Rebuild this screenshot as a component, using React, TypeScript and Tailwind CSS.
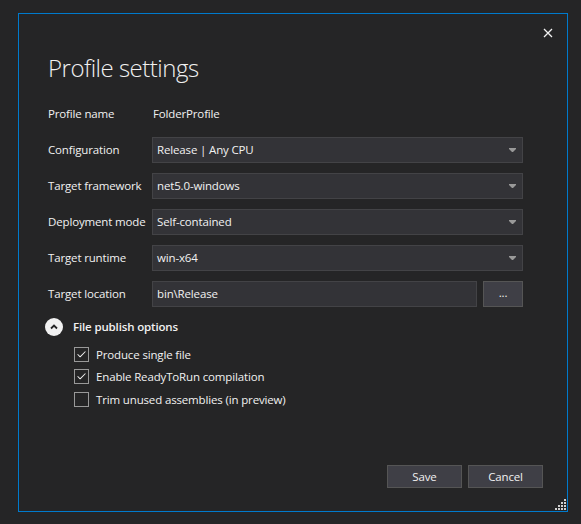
import { Check } from "lucide-react";

const fields = [
  { label: "Configuration", value: "Release | Any CPU" },
  { label: "Target framework", value: "net5.0-windows" },
  { label: "Deployment mode", value: "Self-contained" },
  { label: "Target runtime", value: "win-x64" },
];

const options = [
  { label: "Produce single file", checked: true },
  { label: "Enable ReadyToRun compilation", checked: true },
  { label: "Trim unused assemblies (in preview)", checked: false },
];

function DropArrow() {
  return (
    <svg width="7" height="4" viewBox="0 0 7 4" className="shrink-0">
      <path d="M0 0h7v1L4 4H3L0 1z" fill="#999999" />
    </svg>
  );
}

function ComboBox({ value }: { value: string }) {
  return (
    <div className="flex h-[26px] w-[371px] items-center justify-between border border-[#434346] bg-[#333337] pl-[4px] pr-[6px]">
      <span>{value}</span>
      <DropArrow />
    </div>
  );
}

function Row({ label, children }: { label: string; children: React.ReactNode }) {
  return (
    <div className="flex h-[26px] items-center">
      <div className="w-[104px] shrink-0 whitespace-nowrap">{label}</div>
      {children}
    </div>
  );
}

function CheckOption({ label, checked }: { label: string; checked: boolean }) {
  return (
    <div className="flex h-[22.5px] items-center gap-[7px] pl-[26px]">
      <div className="flex h-[15px] w-[15px] items-center justify-center border border-[#999999]">
        {checked && <Check size={11} strokeWidth={2.2} color="#f1f1f1" />}
      </div>
      <span>{label}</span>
    </div>
  );
}

function ResizeGrip() {
  const dots: [number, number][] = [];
  for (let r = 0; r < 4; r++) {
    for (let c = 3 - r; c < 4; c++) dots.push([c * 3, r * 3]);
  }
  return (
    <svg width="11" height="11" viewBox="0 0 11 11" className="absolute bottom-[1px] right-[1px]">
      {dots.map(([x, y]) => (
        <rect key={`${x}-${y}`} x={x} y={y} width="2" height="2" fill="#d0d0d0" />
      ))}
    </svg>
  );
}

export default function App() {
  return (
    <div
      className="h-[524px] w-[581px] overflow-hidden bg-[#252526] pt-[13px] pl-[18px] text-[11.5px] tracking-[-0.15px] text-[#f1f1f1]"
      style={{ fontFamily: '"Open Sans", "Noto Sans", sans-serif' }}
    >
      <div className="relative flex h-[499px] w-[550px] flex-col border border-[#007acc] pl-[29px]">
        <div className="flex justify-end pr-[14px] pt-[14px]">
          <svg width="10" height="10" viewBox="0 0 10 10">
            <path d="M1 1l8 8M9 1l-8 8" stroke="#f1f1f1" strokeWidth="1.3" />
          </svg>
        </div>

        <h1 className="mt-[14px] text-[24px] font-light leading-[32px] tracking-[-0.5px]">Profile settings</h1>

        <div className="mt-[17px] flex flex-col gap-[10px]">
          <Row label="Profile name">
            <span className="pl-[1px]">FolderProfile</span>
          </Row>
          {fields.map((f) => (
            <Row key={f.label} label={f.label}>
              <ComboBox value={f.value} />
            </Row>
          ))}
          <Row label="Target location">
            <div className="flex h-[26px] w-[325px] items-center border border-[#434346] bg-[#333337] pl-[4px]">
              bin\Release
            </div>
            <button className="ml-[6px] flex h-[26px] w-[40px] items-center justify-center border border-[#555555] bg-[#3f3f46] pb-[3px]">
              ...
            </button>
          </Row>
        </div>

        <div className="mt-[11px] flex h-[18px] items-center gap-[10px] -ml-[3px]">
          <div className="flex h-[18px] w-[18px] items-center justify-center rounded-full bg-[#f1f1f1]">
            <svg width="8" height="6" viewBox="0 0 8 6">
              <path d="M1 4.5L4 1.5l3 3" stroke="#252526" strokeWidth="1.8" fill="none" />
            </svg>
          </div>
          <span className="font-semibold">File publish options</span>
        </div>

        <div className="mt-[7px] flex flex-col">
          {options.map((o) => (
            <CheckOption key={o.label} label={o.label} checked={o.checked} />
          ))}
        </div>

        <div className="mt-auto flex justify-end gap-[6px] pb-[23px] pr-[24px]">
          <button className="h-[23px] w-[75px] border border-[#555555] bg-[#3f3f46]">Save</button>
          <button className="h-[23px] w-[75px] border border-[#555555] bg-[#3f3f46]">Cancel</button>
        </div>

        <ResizeGrip />
      </div>
    </div>
  );
}
